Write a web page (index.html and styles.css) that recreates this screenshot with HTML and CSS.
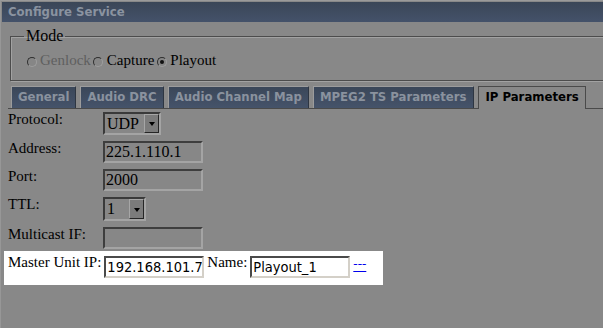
FILE: index.html
```html
<!DOCTYPE html>
<html>
<head>
<meta charset="utf-8">
<link rel="stylesheet" href="styles.css">
</head>
<body>
<div class="dialog">
  <div class="title">Configure Service</div>
  <fieldset class="mode">
    <legend>Mode</legend>
    <div class="radios">
      <span class="radio first"></span><span class="rlabel disabled">Genlock</span>
      <span class="radio second"></span><span class="rlabel">Capture</span>
      <span class="radio third checked"></span><span class="rlabel">Playout</span>
    </div>
  </fieldset>
  <div class="tabs">
    <div class="tab">General</div>
    <div class="tab">Audio DRC</div>
    <div class="tab">Audio Channel Map</div>
    <div class="tab">MPEG2 TS Parameters</div>
    <div class="tab active">IP Parameters</div>
  </div>
  <div class="form">
    <div class="fields">
      <div class="label">Protocol:</div>
      <div class="select proto"><span class="stext">UDP</span><span class="sbtn"><span class="arrow"></span></span></div>
      <div class="label">Address:</div>
      <div class="input">225.1.110.1</div>
      <div class="label">Port:</div>
      <div class="input">2000</div>
      <div class="label">TTL:</div>
      <div class="select ttl"><span class="stext">1</span><span class="sbtn"><span class="arrow"></span></span></div>
      <div class="label">Multicast IF:</div>
      <div class="input"></div>
    </div>
    <div class="highlight">
      <span class="hlabel">Master Unit IP:</span>
      <span class="winput">192.168.101.7</span>
      <span class="hlabel">Name:</span>
      <span class="winput">Playout_1</span>
      <a class="more" href="#">---</a>
    </div>
  </div>
</div>
</body>
</html>
```
FILE: styles.css
```css
html, body {
  margin: 0;
  padding: 0;
  background: #888888;
  overflow: hidden;
  width: 603px;
  height: 328px;
}

.dialog {
  width: 700px;
  height: 327px;
  border-top: 1px solid #9a9a9a;
  border-left: 1px solid #979797;
  font-family: "Liberation Serif", "Times New Roman", serif;
}

.title {
  margin: 1px 0 0 1px;
  height: 20px;
  line-height: 20px;
  padding-left: 6px;
  background: linear-gradient(#3a4657, #44526a);
  color: #8a93a0;
  font-family: "DejaVu Sans Condensed", "DejaVu Sans", sans-serif;
  font-stretch: condensed;
  font-weight: bold;
  font-size: 13px;
}

.mode {
  margin: 5px 0 0 9px;
  padding: 7px 0 11px 13px;
  border: 1px solid #4c4c4c;
  box-shadow: 1px 1px 0 #a2a2a2, inset 1px 1px 0 #a2a2a2;
  min-inline-size: 0;
}

.mode legend {
  padding: 0 2px;
  font-size: 16px;
  line-height: 18px;
  color: #000;
}

.radios {
  display: flex;
  align-items: flex-start;
  font-size: 15px;
  line-height: 17px;
  height: 17px;
}

.radio {
  box-sizing: border-box;
  width: 10px;
  height: 10px;
  margin-top: 5px;
  border-radius: 50%;
  border: 1px solid;
  border-color: #2f2f2f #9e9e9e #9e9e9e #2f2f2f;
  background: #868686;
  position: relative;
}

.radio.first { margin-left: 3px; margin-right: 3px; }
.radio.second { margin-left: 2px; margin-right: 4px; }
.radio.third { margin-left: 3px; margin-right: 3px; }

.radio.checked::after {
  content: "";
  position: absolute;
  left: 2px;
  top: 2px;
  width: 4px;
  height: 4px;
  border-radius: 50%;
  background: #111;
}

.rlabel { color: #000; }
.rlabel.disabled { color: #5f5f5f; }

.tabs {
  display: flex;
  align-items: flex-end;
  margin: 5px 0 0 7px;
  padding-left: 3px;
  height: 22px;
  border-bottom: 1px solid #4a4a4a;
}

.tab {
  box-sizing: border-box;
  height: 22px;
  margin-right: 4px;
  padding: 0 6px;
  line-height: 20px;
  border: 1px solid;
  border-bottom: 0;
  border-color: #9c9c9c #2e3642 #2e3642 #9c9c9c;
  background: linear-gradient(#3b4759, #45536a);
  color: #8a929e;
  font-family: "DejaVu Sans Condensed", "DejaVu Sans", sans-serif;
  font-stretch: condensed;
  font-weight: bold;
  font-size: 13px;
  white-space: nowrap;
}

.tab.active {
  height: 23px;
  margin-bottom: -1px;
  padding: 0 6px 1px 7px;
  background: #888888;
  border-color: #4a4a4a;
  color: #000;
}

.form {
  margin-top: 3px;
  padding-left: 3px;
}

.fields {
  display: grid;
  grid-template-columns: 95px auto;
  row-gap: 6px;
  padding-left: 4px;
  justify-items: start;
}

.label {
  font-size: 15px;
  line-height: 17px;
  margin-top: -1px;
  color: #000;
  white-space: nowrap;
}

.input {
  box-sizing: border-box;
  width: 100px;
  height: 22px;
  border: 2px solid;
  border-color: #3e3e3e #a4a4a4 #a4a4a4 #3e3e3e;
  padding-left: 1px;
  font-size: 16px;
  line-height: 18px;
  color: #000;
  background: #878787;
}

.select {
  box-sizing: border-box;
  display: flex;
  height: 23px;
  border: 2px solid;
  border-color: #3a3a3a #a4a4a4 #a4a4a4 #3a3a3a;
  background: #878787;
}

.select.proto { width: 58px; }
.select.ttl { width: 43px; height: 24px; }

.stext {
  flex: 1;
  padding-left: 2px;
  font-size: 16px;
  line-height: 19px;
  color: #000;
}

.sbtn {
  box-sizing: border-box;
  width: 15px;
  display: flex;
  align-items: center;
  justify-content: center;
  border: 1px solid;
  border-color: #a6a6a6 #262626 #262626 #a6a6a6;
  background: #7b7b7b;
}

.arrow {
  width: 0;
  height: 0;
  border-left: 3.5px solid transparent;
  border-right: 3.5px solid transparent;
  border-top: 4px solid #000;
  margin-top: 1px;
}

.highlight {
  display: flex;
  align-items: flex-start;
  gap: 3px;
  width: fit-content;
  margin-top: 2px;
  padding: 3px 17px 7px 4px;
  background: #ffffff;
}

.hlabel {
  font-size: 15px;
  line-height: 17px;
  color: #000;
  white-space: nowrap;
}

.winput {
  box-sizing: border-box;
  width: 100px;
  height: 22px;
  margin-top: 2px;
  border: 2px solid;
  border-color: #4a4a4a #d4d0c8 #d4d0c8 #4a4a4a;
  padding-left: 1px;
  overflow: hidden;
  white-space: nowrap;
  font-family: "DejaVu Sans Condensed", "DejaVu Sans", sans-serif;
  font-stretch: condensed;
  font-size: 14.5px;
  line-height: 18px;
  color: #000;
  background: #fff;
}

.more {
  margin-top: 1px;
  font-size: 13px;
  line-height: 17px;
  color: #0000ee;
  text-decoration: underline;
  text-underline-offset: 3px;
}
```
